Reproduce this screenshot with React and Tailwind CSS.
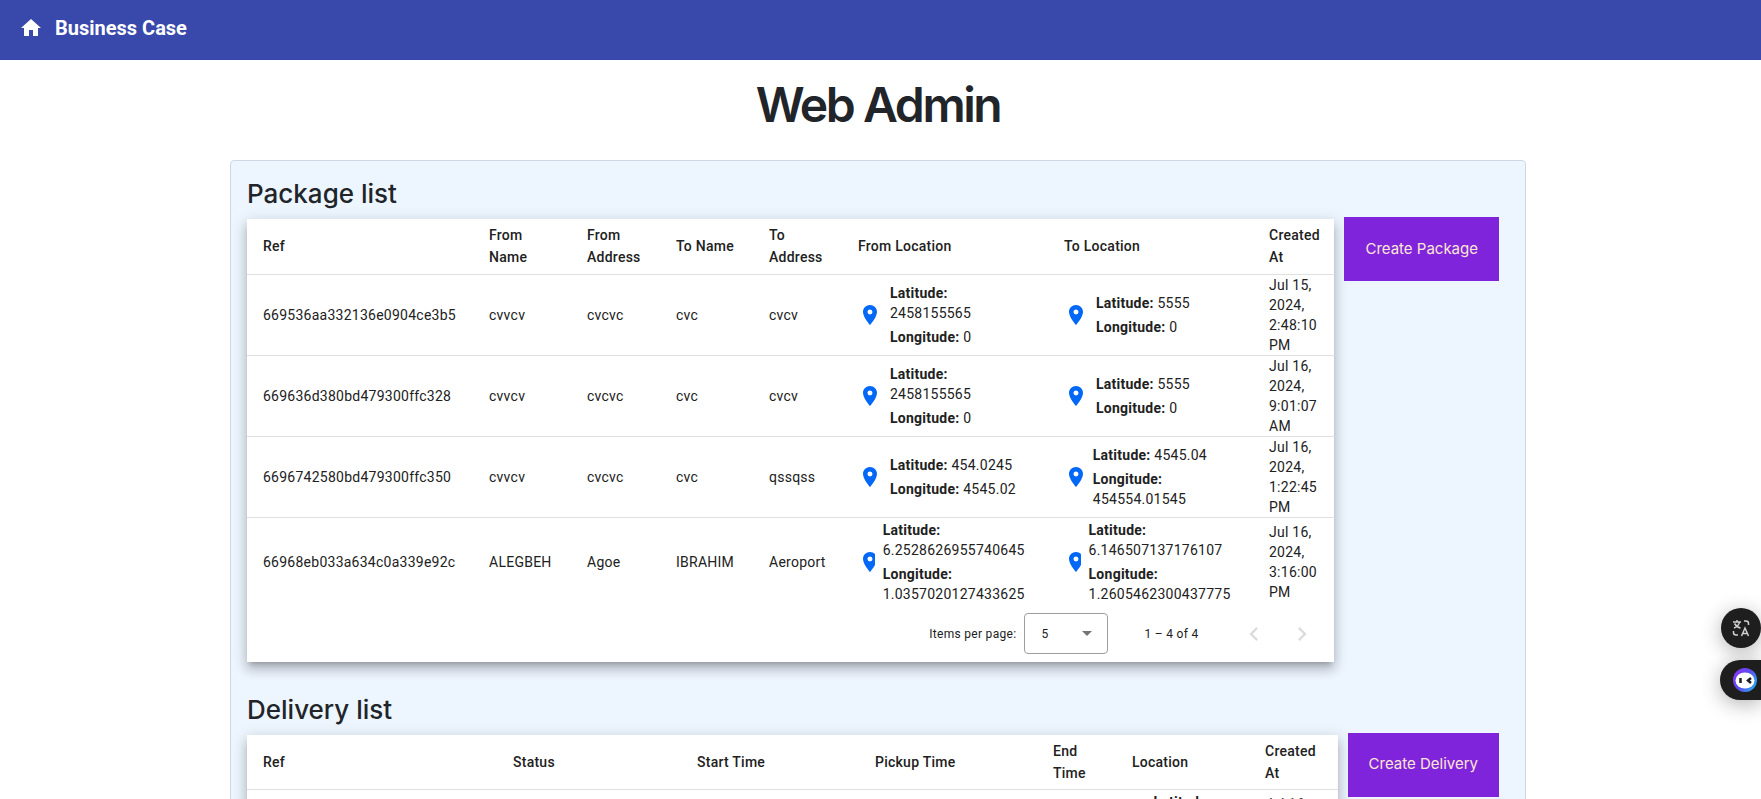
import React from "react";

const PACKAGE_COLUMNS = [
  { label: "Ref", width: "w-[226px]" },
  { label: "From Name", width: "w-[98px]" },
  { label: "From Address", width: "w-[89px]" },
  { label: "To Name", width: "w-[93px]" },
  { label: "To Address", width: "w-[89px]" },
  { label: "From Location", width: "w-[206px]" },
  { label: "To Location", width: "w-[205px]" },
  { label: "Created At", width: "w-[82px]" },
];

const PACKAGES = [
  ["669536aa332136e0904ce3b5", "cvvcv", "cvcvc", "cvc", "cvcv", { lat: "2458155565", lng: "0" }, { lat: "5555", lng: "0" }, "Jul 15, 2024, 2:48:10 PM"],
  ["669636d380bd479300ffc328", "cvvcv", "cvcvc", "cvc", "cvcv", { lat: "2458155565", lng: "0" }, { lat: "5555", lng: "0" }, "Jul 16, 2024, 9:01:07 AM"],
  ["6696742580bd479300ffc350", "cvvcv", "cvcvc", "cvc", "qssqss", { lat: "454.0245", lng: "4545.02" }, { lat: "4545.04", lng: "454554.01545" }, "Jul 16, 2024, 1:22:45 PM"],
  ["66968eb033a634c0a339e92c", "ALEGBEH", "Agoe", "IBRAHIM", "Aeroport", { lat: "6.2528626955740645", lng: "1.0357020127433625" }, { lat: "6.146507137176107", lng: "1.2605462300437775" }, "Jul 16, 2024, 3:16:00 PM"],
];

const DELIVERY_COLUMNS = [
  { label: "Ref", width: "w-[250px]" },
  { label: "Status", width: "w-[184px]" },
  { label: "Start Time", width: "w-[178px]" },
  { label: "Pickup Time", width: "w-[178px]" },
  { label: "End Time", width: "w-[79px]" },
  { label: "Location", width: "w-[133px]" },
  { label: "Created At", width: "w-[89px]" },
];

const DELIVERIES = [
  ["669636d380bd479300ffc328", "open", "", "", "", { lat: "2458155565", lng: "0" }, "Jul 16, 2024, 9:01:07 AM"],
];

function PinIcon() {
  return (
    <span className="h-6 w-6 min-w-0 shrink overflow-hidden text-[#0468f7]" aria-hidden="true">
      <svg viewBox="0 0 24 24" className="h-6 w-6 max-w-none fill-current">
        <path d="M12 2C8.13 2 5 5.13 5 9c0 5.25 7 13 7 13s7-7.75 7-13c0-3.87-3.13-7-7-7zm0 9.5a2.5 2.5 0 0 1 0-5 2.5 2.5 0 0 1 0 5z" />
      </svg>
    </span>
  );
}

function Location({ lat, lng }) {
  return (
    <div className="flex items-center gap-2 py-0.5">
      <PinIcon />
      <div className="flex min-w-0 flex-col gap-1">
        <p><b>Latitude:</b> {lat}</p>
        <p><b>Longitude:</b> {lng}</p>
      </div>
    </div>
  );
}

function DataTable({ columns, rows }) {
  return (
    <table className="w-full table-fixed border-collapse text-left font-[Roboto,sans-serif] text-sm leading-5 tracking-[0.018em] text-[#212121]">
      <thead>
        <tr className="h-[55px] border-b border-[#e0e0e0]">
          {columns.map((c) => (
            <th key={c.label} scope="col" className={`${c.width} px-4 py-0 align-middle leading-[22px] font-medium`}>
              {c.label}
            </th>
          ))}
        </tr>
      </thead>
      <tbody>
        {rows.map((row) => (
          <tr key={row[0]} className="border-b border-[#e0e0e0] last:border-b-0">
            {row.map((cell, i) => (
              <td key={columns[i].label} className="px-4 py-0 align-middle">
                {typeof cell === "object" ? <Location {...cell} /> : cell}
              </td>
            ))}
          </tr>
        ))}
      </tbody>
    </table>
  );
}

function Paginator() {
  return (
    <div className="flex h-14 items-center justify-end pr-2 font-[Roboto,sans-serif] text-xs tracking-wide text-[#212121]">
      <label htmlFor="page-size" className="mr-2">Items per page:</label>
      <div className="relative">
        <select id="page-size" defaultValue="5" className="h-[41px] w-[84px] appearance-none rounded border border-[#9e9e9e] bg-white px-4">
          <option>5</option>
          <option>10</option>
          <option>20</option>
        </select>
        <svg viewBox="0 0 10 5" className="pointer-events-none absolute top-[18px] right-4 h-[5px] w-2.5 fill-[#757575]" aria-hidden="true">
          <path d="M0 0h10L5 5z" />
        </svg>
      </div>
      <span className="mr-8 ml-9">1 – 4 of 4</span>
      <button type="button" aria-label="Previous page" disabled className="flex size-12 items-center justify-center text-[#dcdcdc]">
        <svg viewBox="0 0 24 24" className="size-7 fill-current"><path d="M15.41 7.41L14 6l-6 6 6 6 1.41-1.41L10.83 12z" /></svg>
      </button>
      <button type="button" aria-label="Next page" disabled className="flex size-12 items-center justify-center text-[#dcdcdc]">
        <svg viewBox="0 0 24 24" className="size-7 fill-current"><path d="M10 6L8.59 7.41 13.17 12l-4.58 4.59L10 18l6-6z" /></svg>
      </button>
    </div>
  );
}

function ListSection({ title, action, children }) {
  return (
    <section className="mb-[31px]">
      <h2 className="mb-1.5 text-[26px] leading-[34px] font-medium">{title}</h2>
      <div className="mr-2.5 flex items-start gap-2.5">
        <div className="mt-0.5 min-w-0 flex-1 bg-white shadow-[0_5px_5px_-3px_rgba(0,0,0,0.2),0_8px_10px_1px_rgba(0,0,0,0.14),0_3px_14px_2px_rgba(0,0,0,0.12)]">
          {children}
        </div>
        <button type="button" className="h-16 shrink-0 bg-[#8024dc] px-[21px] text-[15px] text-[#fbe7d3]">{action}</button>
      </div>
    </section>
  );
}

export default function App() {
  return (
    <div className="h-screen overflow-y-auto bg-white font-[Inter,sans-serif] text-[#212529] [scrollbar-width:none]">
      <header className="h-[60px] bg-[#3848ab] px-[19px] font-[Roboto,sans-serif] text-white">
        <a href="#" className="flex h-14 items-center gap-3 text-xl font-bold">
          <svg viewBox="0 0 24 24" className="size-6 fill-current" aria-hidden="true"><path d="M10 20v-6h4v6h5v-8h3L12 3 2 12h3v8z" /></svg>
          Business Case
        </a>
      </header>
      <main className="pr-[5px]">
        <h1 className="pt-2.5 pb-5 text-center text-5xl leading-[70px] font-semibold tracking-tighter">Web Admin</h1>
        <div className="mx-auto max-w-[1296px] rounded border border-[#ced8e4] bg-[#edf5ff] p-4">
          <ListSection title="Package list" action="Create Package">
            <DataTable columns={PACKAGE_COLUMNS} rows={PACKAGES} />
            <Paginator />
          </ListSection>
          <ListSection title="Delivery list" action="Create Delivery">
            <DataTable columns={DELIVERY_COLUMNS} rows={DELIVERIES} />
          </ListSection>
        </div>
      </main>
      <div className="fixed right-0 bottom-[99px] flex flex-col items-end gap-3">
        <button type="button" aria-label="Translate" className="flex size-10 items-center justify-center rounded-full bg-[#1e1e1e] shadow-[0_4px_20px_rgba(0,0,0,0.3)]">
          <svg viewBox="0 0 18 18" className="size-[18px] fill-none stroke-[#d0d0d0] stroke-[1.5]">
            <path d="M1 3h8M5 1v2M2 9c3-1 5-3 5.500-6M2.500 4.500C4 7 6 8.500 8.500 9M12 2h2q2.500 0 2.500 2.500V6M1.500 12v1.500Q1.500 16 4 16h2M9.500 17l3.500-8 3.500 8M10.500 14.500h5" />
          </svg>
        </button>
        <button type="button" aria-label="Assistant" className="flex h-10 w-[41px] items-center rounded-l-full bg-[#1e1e1e] pl-[13px] shadow-[0_4px_20px_rgba(0,0,0,0.3)]">
          <svg viewBox="0 0 24 24" className="size-6">
            <defs>
              <linearGradient id="bot" x1="0" y1="0.2" x2="1" y2="0.8">
                <stop offset="0" stopColor="#8a35f5" />
                <stop offset="0.5" stopColor="#5a4df0" />
                <stop offset="1" stopColor="#22b4ee" />
              </linearGradient>
            </defs>
            <circle cx="12" cy="12" r="12" fill="url(#bot)" />
            <ellipse cx="12" cy="12.500" rx="9.500" ry="8" fill="#fff" />
            <path d="M7.500 10v5M18 10l-3 2.500 3 2.500" fill="none" stroke="#1e1e1e" strokeWidth="2.500" />
          </svg>
        </button>
      </div>
    </div>
  );
}
